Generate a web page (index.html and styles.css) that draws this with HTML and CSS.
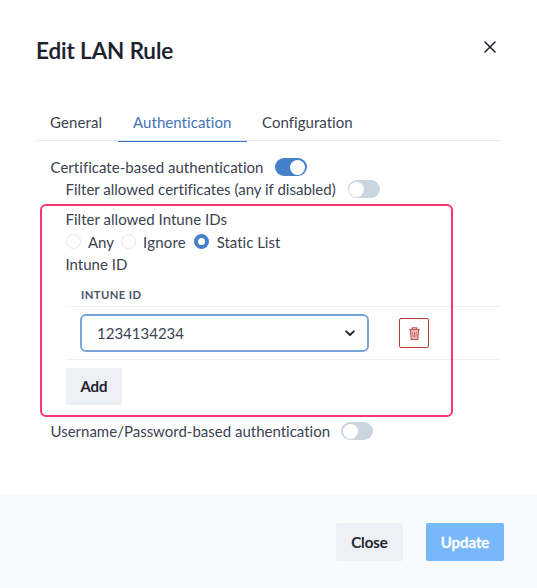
FILE: index.html
```html
<!DOCTYPE html>
<html lang="en">
<head>
<meta charset="utf-8">
<title>Edit LAN Rule</title>
<link rel="stylesheet" href="styles.css">
</head>
<body>
<main class="modal">
  <header class="header">
    <h1>Edit LAN Rule</h1>
    <button class="dismiss" aria-label="Close dialog"><svg width="12" height="12" viewBox="0 0 12 12"><path d="M1 1l10 10M11 1L1 11" fill="none" stroke="currentColor" stroke-width="1.5" stroke-linecap="round"/></svg></button>
  </header>
  <nav class="tabs">
    <a class="tab tab-general">General</a>
    <a class="tab tab-auth active">Authentication</a>
    <a class="tab tab-config">Configuration</a>
  </nav>
  <section class="panel">
    <div class="row"><span class="t-cert">Certificate-based authentication</span><i class="switch on"></i></div>
    <div class="row nested"><span class="t-filter">Filter allowed certificates (any if disabled)</span><i class="switch"></i></div>
    <div class="intune">
      <div class="highlight"></div>
      <div class="line"><span class="t-ids">Filter allowed Intune IDs</span></div>
      <div class="radios">
        <label class="r-any"><i class="radio"></i><span>Any</span></label>
        <label class="r-ignore"><i class="radio"></i><span>Ignore</span></label>
        <label class="r-static"><i class="radio checked"></i><span>Static List</span></label>
      </div>
      <div class="line"><span class="t-id">Intune ID</span></div>
      <div class="th"><span>INTUNE ID</span></div>
      <div class="entry">
        <div class="select"><span>1234134234</span><svg width="10" height="7" viewBox="0 0 10 7"><path d="M1.2 1.3L5 5l3.8-3.7" fill="none" stroke="currentColor" stroke-width="1.8" stroke-linecap="round" stroke-linejoin="round"/></svg></div>
        <button class="delete" aria-label="Delete"><svg width="11" height="13" viewBox="0 0 11 13"><path d="M1.5 3l.7 9.3h6.6L9.5 3z" fill="currentColor" fill-opacity=".2"/><g fill="none" stroke="currentColor"><path d="M.3 2.7h10.4M3.3 2.5V.9h4.4v1.6M1.5 3l.7 9.3h6.6L9.5 3" stroke-width="1.2"/><path d="M3.7 4.5l.3 6M5.5 4.5v6M7.3 4.5l-.3 6" stroke-width=".9"/></g></svg></button>
      </div>
      <button class="btn add"><span>Add</span></button>
    </div>
    <div class="row last"><span class="t-user">Username/Password-based authentication</span><i class="switch"></i></div>
  </section>
  <footer class="footer">
    <button class="btn close"><span>Close</span></button>
    <button class="btn update"><span>Update</span></button>
  </footer>
</main>
</body>
</html>
```
FILE: styles.css
```css
* { box-sizing: border-box; }
body { margin: 0; background: #fff; color: #3b4352; font: 15px/22px Lato, sans-serif; font-variant-ligatures: none; }
button { font: inherit; padding: 0; border: 0; background: none; color: inherit; }
svg { display: block; flex: none; }
.modal { width: 537px; height: 588px; display: flex; flex-direction: column; overflow: hidden; white-space: nowrap; }
.header { display: flex; justify-content: space-between; padding: 36px 41px 0 36px; height: 105px; color: #1a202c; }
h1 { margin: 0; font-size: 22.5px; line-height: 30px; font-weight: 600; letter-spacing: -.1px; -webkit-text-stroke: .2px currentColor; }
.dismiss { height: 12px; margin-top: 5px; }
.tabs { display: flex; height: 36px; margin: 0 36px 0 36px; border-bottom: 1px solid #e2e8f0; }
.tab { height: 37px; padding: 6px 15px 0; border-bottom: 1px solid transparent; }
.tab-general { width: 82px; padding: 6px 14px 0; letter-spacing: .1px; }
.tab-auth { width: 129px; letter-spacing: .06px; }
.tab-config { letter-spacing: .04px; }
.tab.active { color: #4273b8; border-color: #3d6fb6; }
.panel { padding: 15px 37px 0 51px; flex: 1; }
.row { display: flex; align-items: center; height: 22px; gap: 11px; }
.row span, .line span { margin-left: -.5px; }
.t-cert, .t-ids { letter-spacing: .03px; }
.nested { padding-left: 15px; height: 22px; gap: 12px; }
.switch { width: 32px; height: 18px; padding: 1.5px; border-radius: 9px; background: #cbd5e0; flex: none; }
.switch::before { content: ""; display: block; width: 15px; height: 15px; border-radius: 50%; background: #fff; }
.switch.on { background: #4680cb; }
.switch.on::before { margin-left: auto; }
.intune { position: relative; padding-left: 15px; margin-top: 8px; height: 212px; }
.highlight { position: absolute; left: -11px; top: -4px; width: 413px; height: 213px; border: 2px solid #fd3570; border-radius: 6px; }
.line { height: 22px; display: flex; align-items: center; }
.radios { display: flex; height: 23px; align-items: center; gap: 7px; }
.radios label { display: flex; align-items: center; gap: 7px; }
.r-ignore { letter-spacing: .2px; }
.r-static span { margin-left: .7px; }
.radio { width: 15px; height: 15px; border-radius: 50%; border: 1px solid #e2e8f0; background: #fff; }
.radio.checked { border: 4.5px solid #4680cb; margin-left: 1px; }
.th { height: 32px; padding: 9px 15px 0; border-bottom: 1px solid #edf2f7; font-size: 11.25px; line-height: 22px; font-weight: 700; color: #4a5568; letter-spacing: .4px; }
.entry { display: flex; align-items: center; gap: 30px; height: 53px; padding-left: 14px; border-bottom: 1px solid #edeff2; }
.select { display: flex; align-items: center; justify-content: space-between; width: 289px; height: 38px; padding: 0 12px 0 15px; border: 2px solid #77a4da; border-radius: 6px; }
.select span { padding-bottom: 1px; }
.select svg { color: #1a202c; }
.delete { display: grid; place-items: center; width: 30px; height: 30px; border: 1px solid #b83832; border-radius: 2px; color: #c45550; }
.btn { display: grid; place-items: center; height: 38px; border-radius: 2px; background: #edf0f5; color: #1a202c; font-weight: 600; -webkit-text-stroke: .2px currentColor; }
.add { width: 56px; height: 37px; margin-top: 8px; padding-bottom: 1px; }
.footer { height: 93px; display: flex; justify-content: flex-end; gap: 23px; padding: 28px 33px 0 0; background: #f8fafc; }
.close { width: 67px; }
.update { width: 78px; color: #fff; background: #77b8fa; -webkit-text-stroke: .4px currentColor; }
```
